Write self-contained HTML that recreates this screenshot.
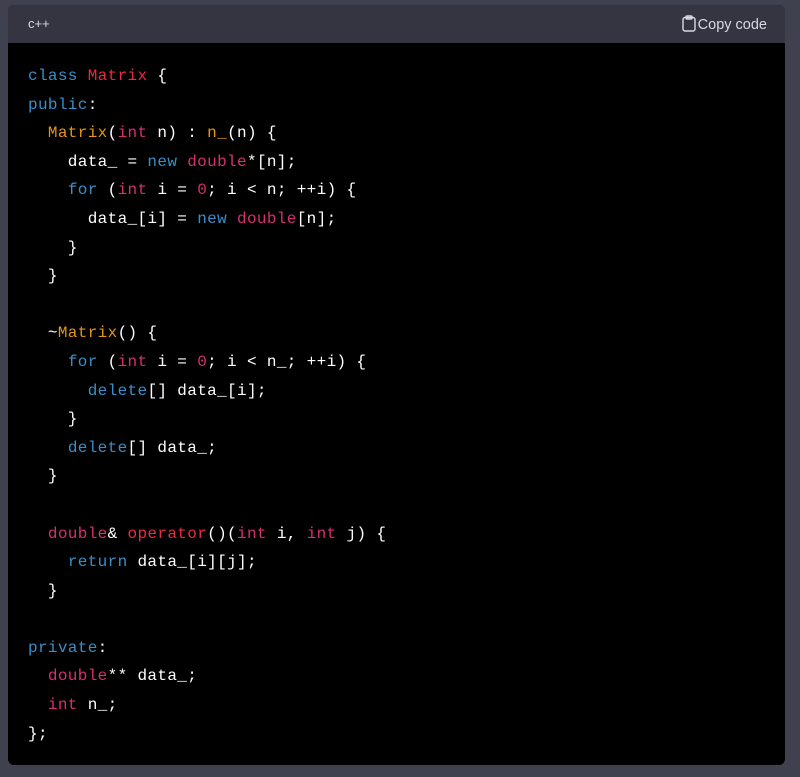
<!DOCTYPE html>
<html><head><meta charset="utf-8"><style>
html,body{margin:0;padding:0;background:#40414f;width:800px;height:777px;overflow:hidden}
.box{position:absolute;left:8px;top:5px;width:777px;height:760px;background:#000;border-radius:6px;overflow:hidden}
.hd{height:38px;background:#343541;color:#d9d9e3;font:13px "Liberation Sans",sans-serif;position:relative}
.hd .l{position:absolute;left:20px;top:11px}
.hd .r{position:absolute;right:18px;top:10px;font-size:14.5px}
.hd svg{vertical-align:-3px;margin-right:2px}
pre{margin:0;padding:19px 0 0 20px;font:16px/28.6px "Liberation Mono",monospace;letter-spacing:0.35px;color:#fff}
.k{color:#3a8fc9}.t{color:#d6306f}.c{color:#ef2b3c}.f{color:#e69513}
</style></head><body>
<div class="box">
<div class="hd"><span class="l">c++</span><span class="r"><svg width="14" height="17" viewBox="0 0 14 17" fill="none" stroke="#d9d9e3" stroke-width="1.4"><rect x="1" y="2.5" width="12" height="13.5" rx="2"/><rect x="4" y="1" width="6" height="3" rx="1"/></svg>Copy code</span></div>
<pre><span class="k">class</span> <span class="c">Matrix</span> {
<span class="k">public</span>:
  <span class="f">Matrix</span>(<span class="t">int</span> n) : <span class="f">n_</span>(n) {
    data_ = <span class="k">new</span> <span class="t">double</span>*[n];
    <span class="k">for</span> (<span class="t">int</span> i = <span class="t">0</span>; i &lt; n; ++i) {
      data_[i] = <span class="k">new</span> <span class="t">double</span>[n];
    }
  }

  ~<span class="f">Matrix</span>() {
    <span class="k">for</span> (<span class="t">int</span> i = <span class="t">0</span>; i &lt; n_; ++i) {
      <span class="k">delete</span>[] data_[i];
    }
    <span class="k">delete</span>[] data_;
  }

  <span class="t">double</span>&amp; <span class="c">operator</span>()(<span class="t">int</span> i, <span class="t">int</span> j) {
    <span class="k">return</span> data_[i][j];
  }

<span class="k">private</span>:
  <span class="t">double</span>** data_;
  <span class="t">int</span> n_;
};</pre>
</div>
</body></html>
